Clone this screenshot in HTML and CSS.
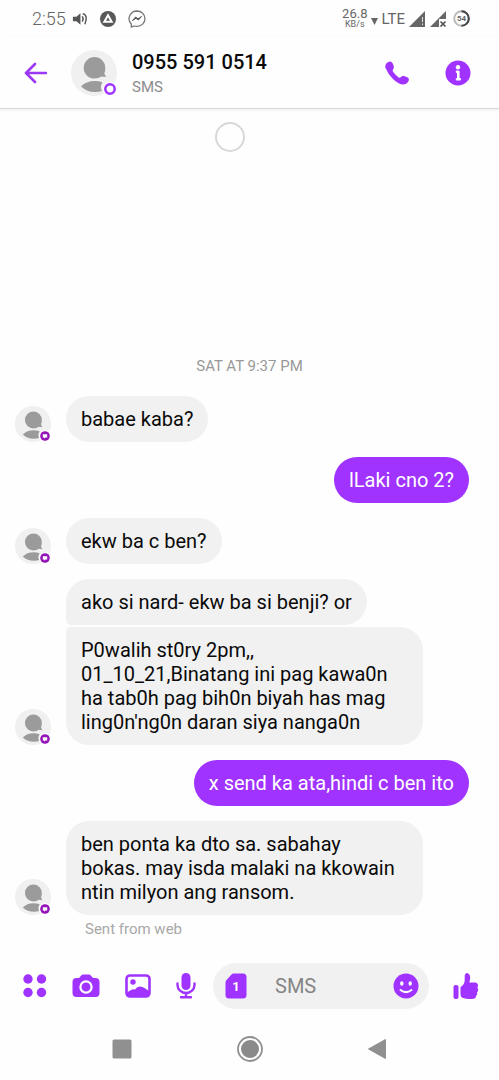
FILE: index.html
```html
<!DOCTYPE html>
<html lang="en">
<head>
<meta charset="utf-8">
<meta name="viewport" content="width=device-width, initial-scale=1">
<title>0955 591 0514</title>
<link rel="stylesheet" href="styles.css">
</head>
<body>
<svg class="defs" aria-hidden="true">
  <symbol id="person" viewBox="0 0 46 46">
    <circle cx="23" cy="23" r="23" fill="#f0f0f0"/>
    <path d="M23.500 7a10.800 10.800 0 1 0 0 21.600q4.500 0 7-2.100l4.500.5-1.700-3.500q1-2.500 1-5.700A10.800 10.800 0 0 0 23.500 7z" fill="#9b9b9b"/>
    <path d="M10 36.500Q15 31 24 31Q28 31 31.500 32.300Q28.500 37 31 41Q28 42 24 42Q16 42 10 36.500z" fill="#9b9b9b"/>
  </symbol>
  <symbol id="bubble-badge" viewBox="0 0 12 12">
    <circle cx="6" cy="6" r="6" fill="#fff"/>
    <circle cx="6" cy="6" r="4.800" fill="#9414b8"/>
    <path d="M3.800 4.200h4.400v3.200H6.500L5 8.600V7.400H3.800z" fill="#fff"/>
  </symbol>
</svg>
<div class="app">
  <div class="status">
    <span class="clock">2:55</span>
    <svg class="status-icon" width="16" height="16" viewBox="0 0 18 18"><path d="M1 6.500h4L9.500 2.500v13L5 11.500H1z" fill="#555"/><path d="M11.500 6q2 3 0 6M12 3q6.500 1.500 2.500 12" fill="none" stroke="#555" stroke-width="1.600"/></svg>
    <svg class="status-icon gap-a" width="16" height="16" viewBox="0 0 16 16"><circle cx="8" cy="8" r="8" fill="#585858"/><path d="M8 4.200l3.700 6.500H4.300z" fill="none" stroke="#fff" stroke-width="2"/></svg>
    <svg class="status-icon gap-b" width="18" height="18" viewBox="0 0 18 18"><path d="M9 1a8 7.700 0 0 1 0 15.400q-1.500 0-2.700-.4L3.300 17v-3A8 7.700 0 0 1 9 1z" fill="none" stroke="#777" stroke-width="1.300"/><path d="M4.500 10.500L7.700 7l2.300 2 3.500-2.500L10.300 10 8 8.200z" fill="#555" stroke="#555"/></svg>
    <span class="rate"><span>26.8</span><span class="unit">KB/s</span></span>
    <svg class="down" width="7" height="7" viewBox="0 0 7 7"><path d="M0 0h7L3.500 7z" fill="#666"/></svg>
    <span class="lte">LTE</span>
    <svg class="signal" width="17" height="16" viewBox="0 0 17 16"><path d="M0 16L16 0v16z" fill="#666"/><path d="M13.500 6v5M13.500 12.500v1.500" stroke="#ddd"/></svg>
    <svg class="signal" width="17" height="16" viewBox="0 0 17 16"><path d="M0 16L16 0v8l-7 0v8z" fill="#666"/><path d="M10.500 10.500l5 5M15.500 10.500l-5 5" stroke="#555" stroke-width="1.700"/></svg>
    <span class="battery"><svg width="17" height="17" viewBox="0 0 17 17"><circle cx="8.500" cy="8.500" r="7.300" fill="none" stroke="#bbb" stroke-width="2"/><path d="M8.500 1.200a7.300 7.300 0 0 1 0 14.600" fill="none" stroke="#444" stroke-width="2"/></svg><span class="level">54</span></span>
  </div>

  <header class="header">
    <button class="icon-button" aria-label="Back"><svg width="23" height="22" viewBox="0 0 23 22"><path d="M22 11H2M11 2L2 11l9 9" fill="none" stroke="#9b37f5" stroke-width="2.600" stroke-linecap="round" stroke-linejoin="round"/></svg></button>
    <span class="avatar large"><svg width="46" height="46"><use href="#person"/></svg><svg class="badge" width="14" height="14" viewBox="0 0 14 14"><circle cx="7" cy="7" r="7" fill="#fff"/><circle cx="7" cy="7" r="4.700" fill="#fff" stroke="#a033ff" stroke-width="2.500"/></svg></span>
    <div class="contact">
      <h1 class="number">0955 591 0514</h1>
      <span class="kind">SMS</span>
    </div>
    <button class="icon-button" aria-label="Call"><svg width="26" height="26" viewBox="0 0 26 26"><path d="M5.500 1.500Q8 1 9 4l.8 2.500q.4 1.800-.8 3Q8 10.400 9.200 12q2.400 3.200 5.500 5.400 1.200.8 2.300-.4 1.100-1.400 3-1l3.300 1.200q2.200 1 1.500 3.300-1.700 4.200-6.300 4-4.500-.6-9.500-5.500T1.300 7.500Q.800 3 5.500 1.500z" fill="#a033ff"/></svg></button>
    <button class="icon-button info" aria-label="Conversation details"><svg width="26" height="26" viewBox="0 0 26 26"><circle cx="13" cy="13" r="12.500" fill="#a033ff"/><circle cx="13" cy="7.200" r="2.200" fill="#fff"/><path d="M12 11.700h1.300V19M12 19.300h2.800" fill="none" stroke="#fff" stroke-width="2.600" stroke-linecap="round" stroke-linejoin="round"/></svg></button>
  </header>

  <main class="thread">
    <div class="spinner" role="status" aria-label="Loading"></div>
    <p class="date">SAT AT 9:37 PM</p>

    <div class="row">
      <span class="avatar"><svg width="36" height="36"><use href="#person"/></svg><svg class="badge" width="12" height="12"><use href="#bubble-badge"/></svg></span>
      <div class="group"><p class="bubble">babae kaba?</p></div>
    </div>
    <div class="row sent"><p class="bubble">lLaki cno 2?</p></div>
    <div class="row">
      <span class="avatar"><svg width="36" height="36"><use href="#person"/></svg><svg class="badge" width="12" height="12"><use href="#bubble-badge"/></svg></span>
      <div class="group"><p class="bubble">ekw ba c ben?</p></div>
    </div>
    <div class="row">
      <span class="avatar"><svg width="36" height="36"><use href="#person"/></svg><svg class="badge" width="12" height="12"><use href="#bubble-badge"/></svg></span>
      <div class="group">
        <p class="bubble first">ako si nard- ekw ba si benji? or</p>
        <p class="bubble last">P0walih st0ry 2pm,,<br>01_10_21,Binatang ini pag kawa0n ha tab0h pag bih0n biyah has mag ling0n'ng0n daran siya nanga0n</p>
      </div>
    </div>
    <div class="row sent"><p class="bubble">x send ka ata,hindi c ben ito</p></div>
    <div class="row">
      <span class="avatar"><svg width="36" height="36"><use href="#person"/></svg><svg class="badge" width="12" height="12"><use href="#bubble-badge"/></svg></span>
      <div class="group"><p class="bubble wide">ben ponta ka dto sa. sabahay<br>bokas. may isda malaki na kkowain<br>ntin milyon ang ransom.</p></div>
    </div>
    <p class="note">Sent from web</p>
  </main>

  <form class="composer">
    <div class="tools">
      <button type="button" class="icon-button" aria-label="More"><svg width="24" height="24" viewBox="0 0 24 24" fill="#a033ff"><circle cx="5" cy="5" r="4.700"/><circle cx="18.500" cy="5" r="4.700"/><circle cx="5" cy="18.500" r="4.700"/><circle cx="18.500" cy="18.500" r="4.700"/></svg></button>
      <button type="button" class="icon-button" aria-label="Camera"><svg width="28" height="24" viewBox="0 0 28 24"><path d="M4.500 4H7l2-2.300Q9.800.5 11.200.5h5.600q1.400 0 2.200 1.200L21 4h2.500Q27.500 4 27.500 8v11q0 4-4 4h-19q-4 0-4-4V8q0-4 4-4z" fill="#a033ff"/><circle cx="14" cy="13" r="5.600" fill="#a033ff" stroke="#fff" stroke-width="2.200"/></svg></button>
      <button type="button" class="icon-button" aria-label="Gallery"><svg width="26" height="24" viewBox="0 0 26 24"><rect x="1.500" y="1.500" width="23" height="21" rx="3.500" fill="#fff" stroke="#a033ff" stroke-width="2.600"/><circle cx="8" cy="8" r="2.700" fill="#a033ff"/><path d="M2 18.500l4-2.500q2-1 4-.5 2-3 5-3 2.500 0 4.500 1.500l4.500 3v3q0 2.500-3 2.500H4.500Q2 22.500 2 20z" fill="#a033ff"/></svg></button>
      <button type="button" class="icon-button" aria-label="Voice message"><svg width="20" height="26" viewBox="0 0 20 26"><rect x="5.500" y="0" width="9" height="17" rx="4.500" fill="#a033ff"/><path d="M1.500 10.500v1.500a8.500 8 0 0 0 17 0v-1.500M10 20v4M5 24.300h10" fill="none" stroke="#a033ff" stroke-width="2.400" stroke-linecap="round"/></svg></button>
    </div>
    <div class="field">
      <button type="button" class="icon-button sim" aria-label="SIM 1"><svg width="22" height="26" viewBox="0 0 22 26"><path d="M8.500.5H18q3.500 0 3.500 3.500v18q0 3.500-3.500 3.500H4Q.5 25.500.5 22V9.500Q.5 8 1.500 7l5-5.500q1-1 2-1z" fill="#a033ff"/></svg><span class="sim-number">1</span></button>
      <input class="text" type="text" placeholder="SMS" aria-label="SMS">
      <button type="button" class="icon-button" aria-label="Emoji"><svg width="26" height="26" viewBox="0 0 26 26"><circle cx="13" cy="13" r="12.500" fill="#a033ff"/><ellipse cx="8.800" cy="10.500" rx="1.700" ry="2.300" fill="#fff"/><ellipse cx="17.200" cy="10.500" rx="1.700" ry="2.300" fill="#fff"/><path d="M7.500 17q5.500 4.300 11 0" fill="none" stroke="#fff" stroke-width="2" stroke-linecap="round"/></svg></button>
    </div>
    <button type="button" class="icon-button" aria-label="Like"><svg width="26" height="28" viewBox="0 0 26 28" fill="#a033ff"><rect x="0.500" y="13" width="5" height="14" rx="2"/><path d="M7.500 15q3.500-2 4.200-6V3.500Q12 1 14 1q3 .5 3.200 4.500 0 2.500-1 5H22q3 .3 3 3 0 1.300-.8 2 1.600 1.400.8 3.500-.3.900-1 1.400.8 1.600-.5 3.100l-.6.500q.3 2.500-2.400 2.800-6.500.7-10.500-.8-2.500-.8-2.500-3.500z"/></svg></button>
  </form>

  <nav class="system" aria-label="System">
    <button class="icon-button" aria-label="Recent apps"><svg width="20" height="20" viewBox="0 0 20 20"><rect x=".5" y=".5" width="19" height="19" rx="1.500" fill="#909090"/></svg></button>
    <button class="icon-button" aria-label="Home"><svg width="26" height="26" viewBox="0 0 26 26"><circle cx="13" cy="13" r="12" fill="none" stroke="#909090" stroke-width="1.800"/><circle cx="13" cy="13" r="9" fill="#8a8a8a"/></svg></button>
    <button class="icon-button" aria-label="Go back"><svg width="20" height="22" viewBox="0 0 20 22"><path d="M18.500 1.500v19L1.500 11z" fill="#909090" stroke="#909090" stroke-linejoin="round"/></svg></button>
  </nav>
</div>
</body>
</html>
```
FILE: styles.css
```css
* {
  box-sizing: border-box;
}

body {
  margin: 0;
  background: #fefefe;
  color: #0a0a0a;
  font-family: Roboto, "Liberation Sans", sans-serif;
}

h1,
p {
  margin: 0;
}

svg {
  display: block;
  flex: none;
}

.defs {
  position: absolute;
  width: 0;
  height: 0;
}

.app {
  display: flex;
  flex-direction: column;
  min-height: 100vh;
}

.icon-button {
  display: flex;
  flex: none;
  align-items: center;
  justify-content: center;
  padding: 0;
  border: 0;
  background: none;
}

.status {
  display: flex;
  align-items: center;
  height: 37px;
  padding: 0 29px 0 32px;
  color: #666;
}

.clock {
  margin-right: 6px;
  font-size: 18px;
  font-weight: 300;
}

.gap-a,
.gap-b {
  margin-left: 12px;
}

.rate {
  display: flex;
  flex-direction: column;
  align-items: center;
  margin-left: auto;
  font-size: 13px;
  line-height: 12px;
}

.unit {
  font-size: 9px;
  line-height: 9px;
}

.down {
  margin: 6px 3px 0 4px;
}

.lte {
  margin-right: 4px;
  font-size: 15px;
}

.signal {
  margin-right: 4px;
}

.battery {
  display: grid;
  place-items: center;
  margin-left: 2px;
}

.battery > * {
  grid-area: 1 / 1;
}

.level {
  font-size: 8px;
  font-weight: 700;
}

.header {
  display: flex;
  align-items: center;
  height: 72px;
  padding: 0 28px 0 24px;
  border-bottom: 1px solid #d8d8d8;
  box-shadow: 0 1px 3px #eeeeee;
}

.avatar {
  position: relative;
  flex: none;
}

.avatar.large {
  margin: 0 15px 0 24px;
}

.badge {
  position: absolute;
  right: 0;
  bottom: 0;
}

.contact {
  display: flex;
  flex: 1;
  flex-direction: column;
  gap: 4px;
}

.number {
  font-size: 20px;
  font-weight: 500;
  line-height: 24px;
}

.kind {
  color: #8c8c8c;
  font-size: 15px;
  line-height: 18px;
}

.info {
  margin-left: 35px;
}

.thread {
  display: flex;
  flex: 1;
  flex-direction: column;
  gap: 15px;
  padding: 13px 30px 25px 15px;
}

.spinner {
  align-self: center;
  width: 30px;
  height: 30px;
  margin-right: 24px;
  border: 2px solid #d8d8d8;
  border-radius: 50%;
}

.date {
  margin: auto 0 6px;
  padding-left: 15px;
  color: #999;
  font-size: 15px;
  line-height: 18px;
  text-align: center;
}

.row {
  display: flex;
  align-items: flex-end;
  gap: 15px;
}

.sent {
  justify-content: flex-end;
}

.group {
  display: flex;
  flex-direction: column;
  align-items: flex-start;
  gap: 2px;
}

.bubble {
  max-width: 357px;
  padding: 11px 15px;
  border-radius: 23px;
  background: #f1f1f1;
  font-size: 20px;
  line-height: 24px;
}

.wide {
  width: 357px;
}

.sent .bubble {
  background: #a033ff;
  color: #fff;
}

.first {
  border-bottom-left-radius: 5px;
}

.last {
  border-top-left-radius: 5px;
}

.note {
  margin-top: -10px;
  padding-left: 70px;
  color: #a8a8a8;
  font-size: 15px;
  line-height: 18px;
}

.composer {
  display: flex;
  align-items: center;
  gap: 24px;
  padding: 0 20px 0 23px;
}

.tools {
  display: flex;
  gap: 25px;
}

.field {
  display: flex;
  flex: 1;
  align-items: center;
  min-width: 0;
  height: 46px;
  margin-left: -7px;
  padding: 0 10px 0 12px;
  border-radius: 23px;
  background: #f1f1f1;
}

.sim {
  display: grid;
  place-items: center;
}

.sim > * {
  grid-area: 1 / 1;
}

.sim-number {
  color: #fff;
  font: 700 13px Roboto, sans-serif;
}

.text {
  flex: 1;
  width: 0;
  min-width: 0;
  padding: 0 0 0 28px;
  border: 0;
  outline: 0;
  background: none;
  font: 20px Roboto, "Liberation Sans", sans-serif;
}

.text::placeholder {
  color: #858585;
}

.system {
  display: flex;
  align-items: center;
  justify-content: space-between;
  height: 71px;
  padding: 9px 112px 0;
}
```
